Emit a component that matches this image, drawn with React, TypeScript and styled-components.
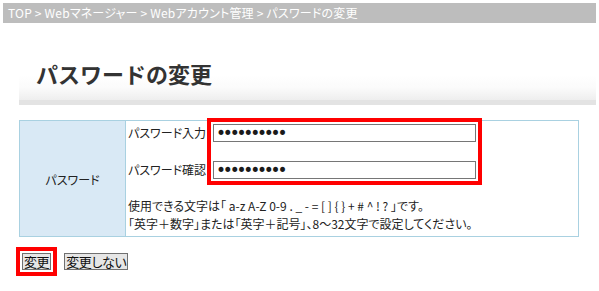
import React from "react";
import styled, { createGlobalStyle } from "styled-components";

const GlobalStyle = createGlobalStyle`
  html, body { margin: 0; padding: 0; background: #fff; }
  body {
    font-family: "Noto Sans CJK JP", "Noto Sans", sans-serif;
    font-size: 12px;
    color: #222;
    font-feature-settings: "palt";
  }
`;

const Page = styled.div`
  width: 599px;
  height: 291px;
  box-sizing: border-box;
  padding: 3px 3px 0;
  display: flex;
  flex-direction: column;
`;

const Breadcrumb = styled.nav`
  height: 20px;
  line-height: 20px;
  background: #bdbdbd;
  color: #fff;
  font-size: 12px;
  padding-left: 5px;
  white-space: nowrap;
  letter-spacing: 0.2px;
`;

const TitleBox = styled.div`
  margin: 27px 0 0 16px;
  height: 50px;
  display: flex;
  align-items: center;
  padding: 0 0 0 17px;
  background: linear-gradient(#fff 0%, #fff 50%, #fbfbfb 75%, #eeeeee 100%);
  border-bottom: 5px solid #e3e3e3;
`;

const Title = styled.h1`
  margin: 0;
  font-size: 22px;
  font-weight: bold;
  color: #333;
  font-feature-settings: normal;
  transform: translateY(-2px);
`;

const FormTable = styled.div`
  margin: 15px 0 0 16px;
  width: 560px;
  box-sizing: border-box;
  border: 1px solid #a9d1e1;
  display: grid;
  grid-template-columns: 106px 1fr;
`;

const HeadCell = styled.div`
  background: #d9e9f5;
  border-right: 1px solid #a9d1e1;
  display: flex;
  align-items: center;
  justify-content: center;
  padding-top: 1px;
`;

const BodyCell = styled.div`
  padding: 3px 0 3px 2px;
  display: flex;
  flex-direction: column;
`;

const Fields = styled.div`
  display: flex;
`;

const LabelCol = styled.div`
  width: 85px;
  display: flex;
  flex-direction: column;
  gap: 19px;
`;

const FieldLabel = styled.label`
  height: 18px;
  line-height: 18px;
  white-space: nowrap;
`;

const Highlight = styled.div<{ $inset: number }>`
  position: relative;
  display: flex;
  flex-direction: column;
  gap: 19px;
  &::after {
    content: "";
    position: absolute;
    inset: ${(p) => -p.$inset}px;
    border: 4px solid #ff0000;
    pointer-events: none;
  }
`;

const PasswordInput = styled.input`
  width: 263px;
  height: 18px;
  box-sizing: border-box;
  border: 1px solid #767676;
  padding: 0 2px;
  margin: 0;
  font-size: 17px;
  font-family: "DejaVu Sans", sans-serif;
  color: #1a1a1a;
  outline: none;
  letter-spacing: -3.2px;
`;

const Note = styled.p`
  margin: 18px 0 0;
  line-height: 18px;
  white-space: nowrap;
`;

const Actions = styled.div`
  margin: 16px 0 0 19px;
  display: flex;
  gap: 13px;
  align-items: flex-start;
`;

const Button = styled.button`
  height: 17px;
  box-sizing: border-box;
  padding: 0 1px;
  margin: 0;
  border: 1px solid #707070;
  background: #e6e6e6;
  color: #111;
  font-family: "Noto Sans CJK JP", sans-serif;
  font-size: 13px;
  line-height: 13px;
  letter-spacing: -0.4px;
  font-feature-settings: "palt";
  display: flex;
  align-items: center;
  cursor: pointer;
`;

export default function App() {
  return (
    <>
      <GlobalStyle />
      <Page>
        <Breadcrumb>TOP &gt; Webマネージャー &gt; Webアカウント管理 &gt; パスワードの変更</Breadcrumb>
        <TitleBox>
          <Title>パスワードの変更</Title>
        </TitleBox>
        <FormTable>
          <HeadCell>パスワード</HeadCell>
          <BodyCell>
            <Fields>
              <LabelCol>
                <FieldLabel htmlFor="pw1">パスワード入力</FieldLabel>
                <FieldLabel htmlFor="pw2">パスワード確認</FieldLabel>
              </LabelCol>
              <Highlight $inset={6}>
                <PasswordInput id="pw1" type="password" defaultValue="abcdefghij" readOnly />
                <PasswordInput id="pw2" type="password" defaultValue="abcdefghij" readOnly />
              </Highlight>
            </Fields>
            <Note>
              使用できる文字は「 a-z A-Z 0-9 . _ - = [ ] {"{"} {"}"} + # ^ ! ? 」です。
              <br />
              「英字＋数字」または「英字＋記号」、8～32文字で設定してください。
            </Note>
          </BodyCell>
        </FormTable>
        <Actions>
          <Highlight $inset={6}>
            <Button type="button">変更</Button>
          </Highlight>
          <Button type="button">変更しない</Button>
        </Actions>
      </Page>
    </>
  );
}
